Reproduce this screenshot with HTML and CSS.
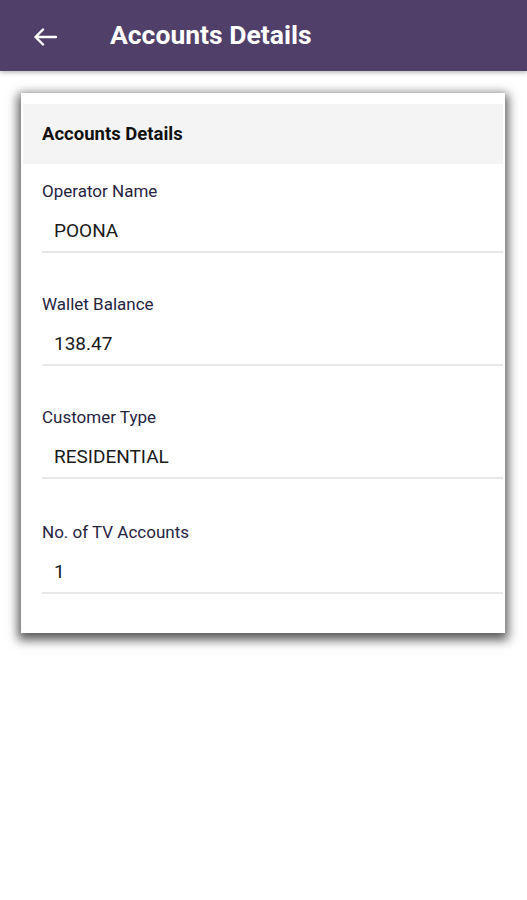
FILE: index.html
```html
<!DOCTYPE html>
<html lang="en">
<head>
    <meta charset="UTF-8">
    <meta name="viewport" content="width=device-width, initial-scale=1.0">
    <title>Accounts Details</title>
    <link rel="stylesheet" href="styles.css">
</head>
<body>

    <div class="barra">
        <a href="#" class="voltar">
            <svg width="24" height="18" viewBox="0 0 24 18">
                <path d="M23 9H2.5M10 1.5L2.5 9L10 16.5" fill="none" stroke="#ffffff" stroke-width="2.4" stroke-linecap="round" stroke-linejoin="round"/>
            </svg>
        </a>
        <h1>Accounts Details</h1>
    </div>

    <div class="cartao">
        <div class="cartao-topo">Accounts Details</div>

        <div class="campo">
            <label>Operator Name</label>
            <p>POONA</p>
        </div>

        <div class="campo">
            <label>Wallet Balance</label>
            <p>138.47</p>
        </div>

        <div class="campo">
            <label>Customer Type</label>
            <p>RESIDENTIAL</p>
        </div>

        <div class="campo">
            <label>No. of TV Accounts</label>
            <p>1</p>
        </div>
    </div>

</body>
</html>
```

FILE: styles.css
```css
body{
    margin: 0;
    min-height: 100vh;
    font-family: Roboto, 'Liberation Sans', sans-serif;
    background-color: #ffffff;
}

.barra{
    background-color: #4f3f69;
    height: 71px;
    display: flex;
    align-items: center;
    padding-left: 33px;
    box-shadow: 0 2px 4px rgba(0, 0, 0, 0.25);
}

.voltar{
    display: flex;
    width: 24px;
    height: 18px;
    margin-top: 3px;
}

.barra h1{
    color: #ffffff;
    font-size: 26.5px;
    font-weight: bold;
    margin: 0 0 2px 53px;
}

.cartao{
    margin: 22px 22px 40px 21px;
    background-color: #ffffff;
    padding: 11px 2px 39px 2px;
    box-shadow: 0 4px 10px 3px rgba(0, 0, 0, 0.65);
}

.cartao-topo{
    background-color: #f4f4f4;
    height: 60px;
    display: flex;
    align-items: center;
    padding-left: 19px;
    font-size: 18.5px;
    font-weight: bold;
    color: #111111;
}

.campo{
    margin-left: 19px;
    padding-top: 16px;
    margin-bottom: 24px;
}

.campo:first-of-type{
    margin-bottom: 0;
}

.campo:last-child{
    margin-bottom: 0;
    padding-top: 18px;
}

.campo label{
    display: block;
    font-size: 17px;
    color: #26233f;
    line-height: 22px;
}

.campo p{
    margin: 0;
    padding: 18px 0 9px 12px;
    font-size: 19px;
    color: #1a1a1a;
    line-height: 22px;
    border-bottom: 2px solid #e8e8e8;
}
```
